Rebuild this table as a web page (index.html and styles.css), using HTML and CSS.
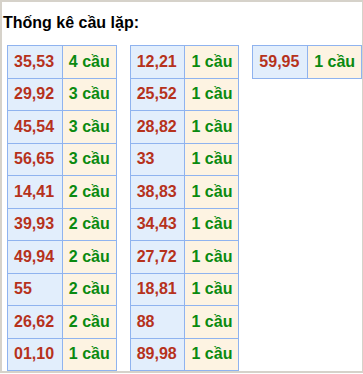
FILE: index.html
```html
<!DOCTYPE html>
<html lang="vi">
<head>
<meta charset="utf-8">
<link rel="stylesheet" href="styles.css">
</head>
<body>
<div class="frame">
  <div class="title">Thống kê cầu lặp:</div>
  <div class="tables">
    <table class="stat">
      <tr><td class="num">35,53</td><td class="cnt">4 cầu</td></tr>
      <tr><td class="num">29,92</td><td class="cnt">3 cầu</td></tr>
      <tr><td class="num">45,54</td><td class="cnt">3 cầu</td></tr>
      <tr><td class="num">56,65</td><td class="cnt">3 cầu</td></tr>
      <tr><td class="num">14,41</td><td class="cnt">2 cầu</td></tr>
      <tr><td class="num">39,93</td><td class="cnt">2 cầu</td></tr>
      <tr><td class="num">49,94</td><td class="cnt">2 cầu</td></tr>
      <tr><td class="num">55</td><td class="cnt">2 cầu</td></tr>
      <tr><td class="num">26,62</td><td class="cnt">2 cầu</td></tr>
      <tr><td class="num">01,10</td><td class="cnt">1 cầu</td></tr>
    </table>
    <table class="stat">
      <tr><td class="num">12,21</td><td class="cnt">1 cầu</td></tr>
      <tr><td class="num">25,52</td><td class="cnt">1 cầu</td></tr>
      <tr><td class="num">28,82</td><td class="cnt">1 cầu</td></tr>
      <tr><td class="num">33</td><td class="cnt">1 cầu</td></tr>
      <tr><td class="num">38,83</td><td class="cnt">1 cầu</td></tr>
      <tr><td class="num">34,43</td><td class="cnt">1 cầu</td></tr>
      <tr><td class="num">27,72</td><td class="cnt">1 cầu</td></tr>
      <tr><td class="num">18,81</td><td class="cnt">1 cầu</td></tr>
      <tr><td class="num">88</td><td class="cnt">1 cầu</td></tr>
      <tr><td class="num">89,98</td><td class="cnt">1 cầu</td></tr>
    </table>
    <table class="stat">
      <tr><td class="num">59,95</td><td class="cnt">1 cầu</td></tr>
    </table>
  </div>
</div>
</body>
</html>
```
FILE: styles.css
```css
html, body {
  margin: 0;
  padding: 0;
  background: #ffffff;
}
.frame {
  box-sizing: border-box;
  width: 363px;
  height: 373px;
  border: 2px solid #d6d2ca;
  border-right-width: 1px;
  border-bottom-width: 2px;
  overflow: hidden;
  font-family: "Liberation Sans", Arial, sans-serif;
  font-weight: bold;
}
.title {
  font-size: 16px;
  line-height: 19px;
  color: #000000;
  padding: 11px 0 0 1px;
  height: 31px;
}
.tables {
  display: flex;
  align-items: flex-start;
  gap: 13px;
  padding-left: 5px;
  padding-top: 1px;
}
.stat {
  border-collapse: collapse;
  font-size: 16px;
}
.stat td {
  border: 1px solid #8fb3ef;
  height: 32.5px;
  padding: 0 0 0 6px;
  box-sizing: border-box;
  line-height: 18px;
  white-space: nowrap;
}
.num {
  width: 55px;
  background: #e2eefc;
  color: #b6321c;
}
.cnt {
  width: 54px;
  background: #fdf3e2;
  color: #0a8a10;
}
```
